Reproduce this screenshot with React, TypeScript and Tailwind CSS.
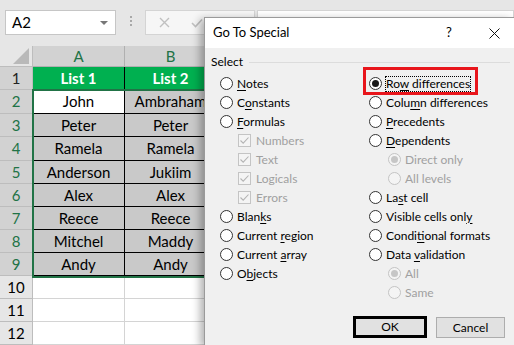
import React from "react";

const rowHeights = [
  "h-[23px]",
  "h-[24px]",
  "h-[23px]",
  "h-[24px]",
  "h-[23px]",
  "h-[23px]",
  "h-[23px]",
  "h-[23px]",
  "h-[23px]",
  "h-[23px]",
  "h-[23px]",
  "h-[23px]",
];

const data = [
  ["Peter", "Peter"],
  ["Ramela", "Ramela"],
  ["Anderson", "Jukiim"],
  ["Alex", "Alex"],
  ["Reece", "Reece"],
  ["Mitchel", "Maddy"],
  ["Andy", "Andy"],
];

function Radio({ checked, disabled }: { checked?: boolean; disabled?: boolean }) {
  return (
    <span
      className={`flex h-[13px] w-[13px] shrink-0 items-center justify-center rounded-full border ${
        disabled ? "border-[#c4c4c4] bg-[#f4f4f4]" : "border-[#333333] bg-white"
      }`}
    >
      {checked && (
        <span
          className={`h-[7px] w-[7px] rounded-full ${disabled ? "bg-[#c6c6c6]" : "bg-[#1a1a1a]"}`}
        />
      )}
    </span>
  );
}

function Check() {
  return (
    <span className="flex h-[13px] w-[13px] shrink-0 items-center justify-center border border-[#c4c4c4] bg-[#f4f4f4]">
      <svg width="11" height="11" viewBox="0 0 11 11">
        <path d="M1.5 5.5 L4.2 8.2 L9.5 2.5" fill="none" stroke="#b4b4b4" strokeWidth="1.1" />
      </svg>
    </span>
  );
}

function Opt({
  label,
  checked,
  disabled,
  sub,
  box,
  focus,
}: {
  label: React.ReactNode;
  checked?: boolean;
  disabled?: boolean;
  sub?: boolean;
  box?: boolean;
  focus?: boolean;
}) {
  return (
    <div className={`flex h-[19px] items-center ${sub ? (box ? "pl-[18px]" : "pl-[19px]") : ""}`}>
      {box ? <Check /> : <Radio checked={checked} disabled={disabled} />}
      <span
        className={`${box ? "ml-[5px]" : "ml-[4px]"} leading-[14px] ${
          disabled ? "text-[#a0a0a0]" : "text-black"
        } ${focus ? "outline outline-1 outline-dotted outline-black" : ""}`}
      >
        {label}
      </span>
    </div>
  );
}

function U({ children }: { children: React.ReactNode }) {
  return <span className="underline underline-offset-2">{children}</span>;
}

export default function App() {
  return (
    <div className="relative h-[345px] w-[514px] overflow-hidden bg-white font-['Lato',sans-serif] text-black">
      {/* formula bar strip */}
      <div className="flex h-[46px] items-start bg-[#e6e6e6] pt-[10px]">
        <div className="ml-[5px] flex h-[25px] w-[111px] items-center border border-[#c6c6c6] bg-white pl-[6px] pr-[7px] text-[15px]">
          <span>A2</span>
          <span className="ml-auto h-0 w-0 border-x-[4px] border-t-[4px] border-x-transparent border-t-[#777]" />
        </div>
        <div className="ml-[14px] mt-[6px] flex flex-col gap-[2px]">
          <span className="h-[2px] w-[2px] bg-[#a8a8a8]" />
          <span className="h-[2px] w-[2px] bg-[#a8a8a8]" />
          <span className="h-[2px] w-[2px] bg-[#a8a8a8]" />
        </div>
        <div className="ml-[13px] flex h-[25px] w-[110px] items-center border border-[#d4d4d4] bg-[#f6f6f6] pl-[13px]">
          <svg width="11" height="11" viewBox="0 0 11 11">
            <path d="M1 1 L10 10 M10 1 L1 10" stroke="#c0c0c0" strokeWidth="1.4" />
          </svg>
          <svg className="ml-[21px]" width="12" height="10" viewBox="0 0 12 10">
            <path d="M1 5 L4.5 8.5 L11 1.5" fill="none" stroke="#c0c0c0" strokeWidth="1.6" />
          </svg>
        </div>
        <div className="ml-[2px] h-[25px] flex-1 border border-[#d4d4d4] bg-white" />
      </div>

      {/* column headers */}
      <div className="flex h-[21px] bg-[#e6e6e6] text-[15px]">
        <div className="relative w-[33px] shrink-0 border-r border-b border-[#bdbdbd]">
          <span className="absolute bottom-[2px] right-[3px] h-0 w-0 border-b-[16px] border-l-[16px] border-b-[#b9b9b9] border-l-transparent" />
        </div>
        <div className="flex w-[92px] shrink-0 items-center justify-center border-r border-b border-[#b0b0b0] bg-[#d2d2d2] text-[#217346]">
          A
        </div>
        <div className="flex w-[92px] shrink-0 items-center justify-center border-r border-b border-[#b0b0b0] bg-[#d2d2d2] text-[#217346]">
          B
        </div>
        <div className="flex-1 border-b border-[#bdbdbd]" />
      </div>

      {/* rows */}
      {rowHeights.map((h, i) => {
        const n = i + 1;
        const inData = n <= 9;
        const hdr =
          n === 1
            ? "bg-[#d2d2d2] text-[#222]"
            : inData
            ? "bg-[#d2d2d2] text-[#217346]"
            : "bg-[#e6e6e6] text-black";
        let a: React.ReactNode = null;
        let b: React.ReactNode = null;
        let cellA = "border-[#d4d4d4] bg-white";
        let cellB = "border-[#d4d4d4] bg-white";
        if (n === 1) {
          a = "List 1";
          b = "List 2";
          cellA = "border-black bg-[#00b050] font-bold text-white";
          cellB = "border-black bg-[#00b050] font-bold text-white";
        } else if (n === 2) {
          a = "John";
          b = "Ambraham";
          cellA = "border-black bg-white";
          cellB = "border-black bg-[#c9c9c9]";
        } else if (inData) {
          a = data[n - 3][0];
          b = data[n - 3][1];
          cellA = "border-black bg-[#c9c9c9]";
          cellB = "border-black bg-[#c9c9c9]";
        }
        return (
          <div key={n} className={`flex ${h} text-[15px]`}>
            <div
              className={`flex w-[33px] shrink-0 items-center justify-center border-r border-b border-[#bdbdbd] ${hdr}`}
            >
              {n}
            </div>
            <div className={`flex w-[92px] shrink-0 items-center justify-center border-r border-b ${cellA}`}>
              {a}
            </div>
            <div
              className={`flex w-[92px] shrink-0 items-center justify-center overflow-hidden whitespace-nowrap border-r border-b ${cellB}`}
            >
              {b}
            </div>
            <div className="flex-1 border-b border-[#d4d4d4]" />
          </div>
        );
      })}

      {/* selection outline A2:B9 */}
      <div className="pointer-events-none absolute left-[32px] top-[89px] h-[189px] w-[186px] border-2 border-[#217346]" />

      {/* Go To Special dialog */}
      <div className="absolute bottom-0 left-[204px] right-0 top-[17px] flex flex-col border-l border-t border-[#9a9a9a] bg-[#f0f0f0] text-[12px] shadow-[-4px_2px_8px_rgba(0,0,0,0.3)]">
        <div className="flex h-[30px] shrink-0 items-center bg-white pl-[8px]">
          <span className="text-[13px]">Go To Special</span>
          <span className="ml-auto w-[12px] text-center text-[13px]">?</span>
          <span className="w-[34px]" />
          <svg width="11" height="11" viewBox="0 0 11 11">
            <path d="M0.5 0.5 L10.5 10.5 M10.5 0.5 L0.5 10.5" stroke="#111" strokeWidth="1" />
          </svg>
          <span className="w-[14px]" />
        </div>

        <div className="flex flex-1 flex-col pl-[6px] pt-[6px]">
          <div className="flex h-[16px] items-center pr-[4px]">
            <span>Select</span>
            <span className="ml-[6px] h-px flex-1 bg-[#dcdcdc]" />
          </div>

          <div className="mt-[4px] grid grid-cols-[149px_1fr] pl-[9px]">
            <div className="flex flex-col">
              <Opt label={<><U>N</U>otes</>} />
              <Opt label={<>C<U>o</U>nstants</>} />
              <Opt label={<><U>F</U>ormulas</>} />
              <Opt sub box disabled label="Numbers" />
              <Opt sub box disabled label="Text" />
              <Opt sub box disabled label="Logicals" />
              <Opt sub box disabled label="Errors" />
              <Opt label={<>Blan<U>k</U>s</>} />
              <Opt label={<>Current <U>r</U>egion</>} />
              <Opt label={<>Current <U>a</U>rray</>} />
              <Opt label={<>O<U>b</U>jects</>} />
            </div>
            <div className="flex flex-col">
              <Opt checked focus label={<>Ro<U>w</U> differences</>} />
              <Opt label={<>Colu<U>m</U>n differences</>} />
              <Opt label={<><U>P</U>recedents</>} />
              <Opt label={<><U>D</U>ependents</>} />
              <Opt sub checked disabled label="Direct only" />
              <Opt sub disabled label="All levels" />
              <Opt label={<>La<U>s</U>t cell</>} />
              <Opt label={<>Visible cells onl<U>y</U></>} />
              <Opt label={<>Condi<U>t</U>ional formats</>} />
              <Opt label={<>Data <U>v</U>alidation</>} />
              <Opt sub checked disabled label="All" />
              <Opt sub disabled label="Same" />
            </div>
          </div>

          <div className="mt-[14px] flex items-start justify-end gap-[9px] pr-[9px]">
            <button className="flex h-[22px] w-[74px] items-center justify-center border-[3px] border-black bg-[#e1e1e1] text-[12px]">
              OK
            </button>
            <button className="mt-[1px] flex h-[21px] w-[69px] items-center justify-center border border-[#adadad] bg-[#e1e1e1] text-[12px]">
              Cancel
            </button>
          </div>
        </div>

        {/* red highlight around Row differences */}
        <div className="pointer-events-none absolute left-[158px] top-[49px] h-[28px] w-[115px] border-[3px] border-[#e8151b]" />
      </div>
    </div>
  );
}
